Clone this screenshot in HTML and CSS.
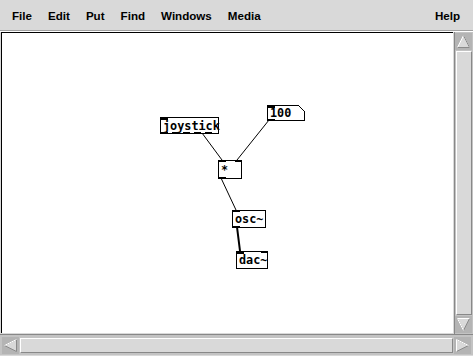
FILE: index.html
```html
<!DOCTYPE html>
<html>
<head>
<meta charset="utf-8">
<link rel="stylesheet" href="styles.css">
</head>
<body>
<div class="window">
  <div class="menubar">
    <span class="menu">File</span>
    <span class="menu">Edit</span>
    <span class="menu">Put</span>
    <span class="menu">Find</span>
    <span class="menu">Windows</span>
    <span class="menu">Media</span>
    <span class="spacer"></span>
    <span class="menu">Help</span>
  </div>
  <div class="main">
    <div class="canvas">
      <svg class="patch" width="451" height="300" viewBox="0 0 451 300">
        <g stroke="#000" stroke-width="1" fill="none">
          <line x1="200" y1="100" x2="220" y2="127"/>
          <line x1="267" y1="87" x2="235" y2="127"/>
          <line x1="219" y1="145" x2="234" y2="177"/>
          <line x1="235" y1="194" x2="238" y2="218" stroke-width="2"/>
        </g>
        <g shape-rendering="crispEdges">
          <rect x="158.5" y="84.5" width="58" height="16" fill="#fff" stroke="#000"/>
          <rect x="216.5" y="127.5" width="23" height="18" fill="#fff" stroke="#000"/>
          <rect x="230.5" y="177.5" width="33" height="17" fill="#fff" stroke="#000"/>
          <rect x="234.5" y="218.5" width="31" height="17" fill="#fff" stroke="#000"/>
          <path d="M265.5 72.5 H296.5 L302.5 78.5 V87.5 H265.5 Z" fill="#fff" stroke="#000"/>
          <g fill="#000">
            <rect x="159" y="85" width="7" height="2"/>
            <rect x="159" y="99" width="7" height="2"/>
            <rect x="170" y="99" width="7" height="1"/>
            <rect x="181" y="99" width="7" height="1"/>
            <rect x="192" y="99" width="7" height="1"/>
            <rect x="203" y="99" width="7" height="1"/>
            <rect x="217" y="128" width="7" height="1"/>
            <rect x="233" y="128" width="7" height="1"/>
            <rect x="217" y="144" width="7" height="2"/>
            <rect x="231" y="178" width="7" height="1"/>
            <rect x="231" y="193" width="7" height="2"/>
            <rect x="235" y="219" width="7" height="2"/>
            <rect x="259" y="219" width="7" height="1"/>
            <rect x="266" y="73" width="7" height="2"/>
            <rect x="266" y="86" width="7" height="2"/>
          </g>
        </g>
        <g class="objtext">
          <text x="161" y="97">joystick</text>
          <text x="219" y="141">*</text>
          <text x="233" y="190">osc~</text>
          <text x="237" y="231">dac~</text>
          <text x="268" y="84">100</text>
        </g>
      </svg>
    </div>
    <div class="vscroll">
      <div class="sbtn">
        <svg width="15" height="15" viewBox="0 0 15 15"><path d="M7.5 1.5 L13.5 13.5 H1.5 Z" fill="#d9d9d9" stroke="#fff"/><path d="M13.5 13.5 H1.5 M7.5 1.5 L13.5 13.5" stroke="#8a8a8a" fill="none"/></svg>
      </div>
      <div class="vtrack"><div class="vthumb"></div></div>
      <div class="sbtn">
        <svg width="15" height="15" viewBox="0 0 15 15"><path d="M1.5 1.5 H13.5 L7.5 13.5 Z" fill="#d9d9d9" stroke="#8a8a8a"/><path d="M13.5 1.5 H1.5 L7.5 13.5" stroke="#fff" fill="none"/></svg>
      </div>
    </div>
  </div>
  <div class="hscroll">
    <div class="sbtn">
      <svg width="15" height="15" viewBox="0 0 15 15"><path d="M1.5 7.5 L13.5 1.5 V13.5 Z" fill="#d9d9d9" stroke="#8a8a8a"/><path d="M13.5 1.5 L1.5 7.5" stroke="#fff" fill="none"/></svg>
    </div>
    <div class="htrack"><div class="hthumb"></div></div>
    <div class="sbtn">
      <svg width="15" height="15" viewBox="0 0 15 15"><path d="M1.5 1.5 L13.5 7.5 L1.5 13.5 Z" fill="#d9d9d9" stroke="#8a8a8a"/><path d="M1.5 13.5 V1.5 L13.5 7.5" stroke="#fff" fill="none"/></svg>
    </div>
  </div>
</div>
</body>
</html>
```
FILE: styles.css
```css
html, body {
  margin: 0;
  padding: 0;
  background: #d9d9d9;
}
.window {
  width: 473px;
  height: 356px;
  display: flex;
  flex-direction: column;
  background: #d9d9d9;
  font-family: "Liberation Sans", Arial, sans-serif;
}
.menubar {
  height: 31px;
  display: flex;
  align-items: center;
  padding: 0 13px 0 12px;
  box-sizing: border-box;
  border-bottom: 1px solid #a0a0a0;
}
.menu {
  font-size: 11.6px;
  font-weight: bold;
  color: #000;
  margin-right: 16px;
}
.menu:last-child { margin-right: 0; }
.spacer { flex: 1; }
.main {
  display: flex;
  height: 302px;
  border-top: 1px solid #fff;
}
.canvas {
  width: 451px;
  height: 300px;
  background: #fff;
  border-top: 1px solid #000;
  border-left: 1px solid #000;
  margin-left: 1px;
  overflow: hidden;
}
.patch { display: block; }
.objtext text {
  font-family: "DejaVu Sans Mono", monospace;
  font-weight: bold;
  font-size: 11.8px;
  fill: #000;
}
.vscroll {
  width: 19px;
  margin-left: 1px;
  display: flex;
  flex-direction: column;
  border-left: 1px solid #888;
  background: #c3c3c3;
  padding: 1px 0;
  box-sizing: border-box;
}
.sbtn {
  width: 17px;
  height: 17px;
  display: flex;
  align-items: center;
  justify-content: center;
  background: #b4b4b4;
  box-sizing: border-box;
  flex: none;
}
.vtrack {
  flex: 1;
  background: #c3c3c3;
  padding: 1px 1px;
  display: flex;
}
.vthumb {
  flex: 1;
  background: #d9d9d9;
  border-left: 1px solid #fff;
  border-top: 1px solid #fff;
  border-right: 1px solid #888;
  border-bottom: 1px solid #888;
}
.hscroll {
  height: 20px;
  display: flex;
  align-items: center;
  padding: 0 2px 0 2px;
  border-top: 1px solid #888;
  background: #c3c3c3;
}
.htrack {
  flex: 1;
  height: 17px;
  background: #c3c3c3;
  display: flex;
  padding: 1px 1px;
  box-sizing: border-box;
}
.hthumb {
  flex: 1;
  background: #d9d9d9;
  border-top: 1px solid #fff;
  border-left: 1px solid #fff;
  border-bottom: 1px solid #888;
  border-right: 1px solid #888;
}
```
